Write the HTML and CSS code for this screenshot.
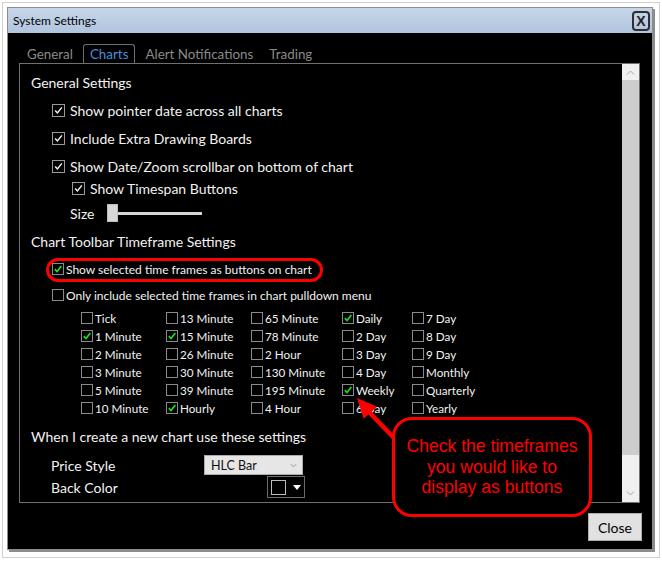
FILE: index.html
```html
<!DOCTYPE html>
<html lang="en">
<head>
  <meta charset="UTF-8" />
  <title>System Settings</title>
  <link rel="stylesheet" href="styles.css">
</head>
<body>

  <div class="frame">
    <div class="window">
      <div class="titlebar">
        <span class="titlebar__text">System Settings</span>
        <span class="titlebar__close">X</span>
      </div>

      <div class="window__body">
        <div class="tabs">
          <span class="tab">General</span>
          <span class="tab tab--active">Charts</span>
          <span class="tab">Alert Notifications</span>
          <span class="tab">Trading</span>
        </div>

        <div class="panel">
          <div class="panel__content">
            <div class="section-title">General Settings</div>
            <div class="row row--main"><span class="cb"><svg viewBox="0 0 13 13"><path d="M2.5 6.5 5.2 9.3 10.5 2.8"/></svg></span>Show pointer date across all charts</div>
            <div class="row row--main"><span class="cb"><svg viewBox="0 0 13 13"><path d="M2.5 6.5 5.2 9.3 10.5 2.8"/></svg></span>Include Extra Drawing Boards</div>
            <div class="row row--main"><span class="cb"><svg viewBox="0 0 13 13"><path d="M2.5 6.5 5.2 9.3 10.5 2.8"/></svg></span>Show Date/Zoom scrollbar on bottom of chart</div>
            <div class="row row--sub"><span class="cb"><svg viewBox="0 0 13 13"><path d="M2.5 6.5 5.2 9.3 10.5 2.8"/></svg></span>Show Timespan Buttons</div>
            <div class="row row--size">
              <span class="row__label">Size</span>
              <span class="slider"><span class="slider__thumb"></span><span class="slider__track"></span></span>
            </div>

            <div class="section-title section-title--tf">Chart Toolbar Timeframe Settings</div>
            <div class="row row--small row--hl"><span class="cb cb--sm cb--green"><svg viewBox="0 0 12 12"><path d="M2.2 6.2 4.8 9 10 2.5"/></svg></span>Show selected time frames as buttons on chart</div>
            <div class="row row--small row--only"><span class="cb cb--sm"></span>Only include selected time frames in chart pulldown menu</div>

            <div class="tf-grid">
              <span class="tf"><span class="cb cb--sm"></span>Tick</span>
              <span class="tf"><span class="cb cb--sm"></span>13 Minute</span>
              <span class="tf"><span class="cb cb--sm"></span>65 Minute</span>
              <span class="tf"><span class="cb cb--sm cb--green"><svg viewBox="0 0 12 12"><path d="M2.2 6.2 4.8 9 10 2.5"/></svg></span>Daily</span>
              <span class="tf"><span class="cb cb--sm"></span>7 Day</span>

              <span class="tf"><span class="cb cb--sm cb--green"><svg viewBox="0 0 12 12"><path d="M2.2 6.2 4.8 9 10 2.5"/></svg></span>1 Minute</span>
              <span class="tf"><span class="cb cb--sm cb--green"><svg viewBox="0 0 12 12"><path d="M2.2 6.2 4.8 9 10 2.5"/></svg></span>15 Minute</span>
              <span class="tf"><span class="cb cb--sm"></span>78 Minute</span>
              <span class="tf"><span class="cb cb--sm"></span>2 Day</span>
              <span class="tf"><span class="cb cb--sm"></span>8 Day</span>

              <span class="tf"><span class="cb cb--sm"></span>2 Minute</span>
              <span class="tf"><span class="cb cb--sm"></span>26 Minute</span>
              <span class="tf"><span class="cb cb--sm"></span>2 Hour</span>
              <span class="tf"><span class="cb cb--sm"></span>3 Day</span>
              <span class="tf"><span class="cb cb--sm"></span>9 Day</span>

              <span class="tf"><span class="cb cb--sm"></span>3 Minute</span>
              <span class="tf"><span class="cb cb--sm"></span>30 Minute</span>
              <span class="tf"><span class="cb cb--sm"></span>130 Minute</span>
              <span class="tf"><span class="cb cb--sm"></span>4 Day</span>
              <span class="tf"><span class="cb cb--sm"></span>Monthly</span>

              <span class="tf"><span class="cb cb--sm"></span>5 Minute</span>
              <span class="tf"><span class="cb cb--sm"></span>39 Minute</span>
              <span class="tf"><span class="cb cb--sm"></span>195 Minute</span>
              <span class="tf"><span class="cb cb--sm cb--green"><svg viewBox="0 0 12 12"><path d="M2.2 6.2 4.8 9 10 2.5"/></svg></span>Weekly</span>
              <span class="tf"><span class="cb cb--sm"></span>Quarterly</span>

              <span class="tf"><span class="cb cb--sm"></span>10 Minute</span>
              <span class="tf"><span class="cb cb--sm cb--green"><svg viewBox="0 0 12 12"><path d="M2.2 6.2 4.8 9 10 2.5"/></svg></span>Hourly</span>
              <span class="tf"><span class="cb cb--sm"></span>4 Hour</span>
              <span class="tf"><span class="cb cb--sm"></span>6 Day</span>
              <span class="tf"><span class="cb cb--sm"></span>Yearly</span>
            </div>

            <div class="section-title section-title--new">When I create a new chart use these settings</div>
            <div class="row row--field">
              <span class="field__label">Price Style</span>
              <span class="select">HLC Bar<svg class="select__arrow" viewBox="0 0 8 5"><path d="M1 1 4 4 7 1"/></svg></span>
            </div>
            <div class="row row--field row--color">
              <span class="field__label">Back Color</span>
              <span class="color-pick"><span class="color-pick__swatch"></span><span class="color-pick__arrow"></span></span>
            </div>
          </div>

          <div class="scroll">
            <div class="scroll__btn"><svg viewBox="0 0 9 5"><path d="M1 4.5 4.5 1 8 4.5"/></svg></div>
            <div class="scroll__thumb"></div>
            <div class="scroll__track"></div>
            <div class="scroll__btn"><svg viewBox="0 0 9 5"><path d="M1 0.5 4.5 4 8 0.5"/></svg></div>
          </div>
        </div>

        <div class="footer">
          <button class="btn">Close</button>
        </div>
      </div>
    </div>
  </div>

  <!-- annotations drawn over the dialog -->
  <div class="hl-ring"></div>
  <svg class="callout-arrow" viewBox="0 0 50 52">
    <line x1="45" y1="49" x2="19" y2="22"/>
    <polygon points="7,8 27,16.8 13.7,28.8"/>
  </svg>
  <div class="callout">Check the timeframes<br>you would like to<br>display as buttons</div>

</body>
</html>
```

FILE: styles.css
```css
/* ── base ── */
* { box-sizing: border-box; }
html, body { margin: 0; padding: 0; }
body {
  position: relative;
  width: 662px; height: 562px;
  overflow: hidden;
  background: #fff;
  font-family: Lato, "Noto Sans", sans-serif;
  color: #f2f2f2;
}

/* ── outer frame + window ── */
.frame {
  margin: 2px;
  width: 658px;
  height: 556px;
  border: 1px solid #d0d0d0;
  padding: 4px;
}
.window {
  width: 646px;
  height: 543px;
  border: 1px solid #8c8c8c;
  box-shadow: 2px 2px 0 #8c8c8c;
  display: flex;
  flex-direction: column;
}
.titlebar {
  height: 25px;
  display: flex;
  align-items: center;
  justify-content: space-between;
  padding: 0 2px 0 5px;
  background: linear-gradient(#c7d7ea, #b0c4de);
  color: #000;
  font-size: 12px;
}
.titlebar__close {
  width: 18px; height: 20px;
  border: 2px solid #2f2f2f;
  border-radius: 4px;
  display: flex; align-items: center; justify-content: center;
  font: bold 14px "Liberation Sans", sans-serif;
  color: #222;
}
.window__body {
  flex: 1;
  background: #000;
  display: flex;
  flex-direction: column;
}

/* ── tabs ── */
.tabs {
  height: 30px;
  display: flex;
  align-items: flex-end;
  padding-left: 13px;
}
.tab {
  height: 19px;
  line-height: 18px;
  padding: 0 5px;
  margin-right: 4px;
  border: 1px solid transparent;
  border-bottom: none;
  border-radius: 3px 3px 0 0;
  font-size: 13.4px;
  color: #8a8a8a;
}
.tab--active {
  padding: 0 6px;
  border-color: #6e6e6e;
  color: #4a8fd8;
}

/* ── panel ── */
.panel {
  margin-left: 11px;
  width: 621px;
  height: 440px;
  border: 1px solid #707070;
  display: flex;
}
.panel__content {
  flex: 1;
  padding-top: 5px;
}
.section-title {
  height: 27px;
  line-height: 28px;
  padding-left: 11px;
  font-size: 14px;
}
.section-title--tf { height: 24px; line-height: 24px; }
.section-title--new { height: 38px; line-height: 39px; }

.row {
  display: flex;
  align-items: center;
  font-size: 14px;
}
.row--main { height: 28px; padding-left: 32px; }
.row--sub { height: 16px; padding-left: 52px; }
.row--size { height: 34px; padding-left: 50px; }
.row__label { width: 37px; }
.row--small { font-size: 12px; padding-left: 32px; }
.row--hl { height: 30px; }
.row--only { height: 22px; }
.row--field { height: 20px; padding-left: 31px; }
.row--color { height: 24px; }

/* checkbox */
.cb {
  width: 13px; height: 13px;
  margin-right: 5px;
  border: 1px solid #9a9a9a;
  background: #000;
  flex: none;
  display: inline-flex;
}
.cb svg { width: 100%; height: 100%; fill: none; stroke: #f0f0f0; stroke-width: 1.8; }
.cb--sm { width: 12px; height: 12px; margin-right: 2px; border-color: #8a8a8a; }
.cb--green svg { stroke: #1ee21e; stroke-width: 2; }

/* size slider */
.slider { display: flex; align-items: center; }
.slider__thumb {
  width: 11px; height: 18px;
  background: #d9d9d9;
  border: 1px solid #bdbdbd;
}
.slider__track { width: 84px; height: 3px; background: #d6d6d6; }

/* timeframe grid */
.tf-grid {
  margin: 3px 0 0 61px;
  display: grid;
  grid-template-columns: 85px 85px 91px 70px 1fr;
  grid-auto-rows: 18px;
  font-size: 11.7px;
}
.tf { display: flex; align-items: center; }

/* fields */
.field__label { width: 153px; }
.select {
  width: 99px; height: 20px;
  display: flex; align-items: center; justify-content: space-between;
  padding: 0 5px 0 6px;
  background: #e6e6e6;
  border: 1px solid #acacac;
  color: #111;
  font-size: 12.5px;
}
.select__arrow { width: 7px; height: 5px; fill: none; stroke: #8f8f8f; stroke-width: 1; }
.color-pick {
  margin-left: 63px;
  width: 38px; height: 22px;
  border: 1px solid #6c6c6c;
  display: flex; align-items: center;
  padding-left: 3px;
}
.color-pick__swatch { width: 15px; height: 15px; border: 1px solid #bcbcbc; background: #000; }
.color-pick__arrow {
  margin-left: 7px;
  border-left: 4px solid transparent;
  border-right: 4px solid transparent;
  border-top: 5px solid #fff;
}

/* scrollbar */
.scroll {
  width: 17px;
  display: flex;
  flex-direction: column;
  background: #f0f0f0;
}
.scroll__btn { height: 16px; display: flex; align-items: center; justify-content: center; }
.scroll__btn:last-child { height: 17px; }
.scroll__btn svg { width: 9px; height: 5px; fill: none; stroke: #a3a3a3; stroke-width: 1; }
.scroll__thumb { height: 375px; background: #cdcdcd; }
.scroll__track { flex: 1; }

/* footer */
.footer {
  flex: 1;
  display: flex;
  justify-content: flex-end;
  align-items: flex-start;
  padding: 10px 10px 0 0;
}
.btn {
  width: 54px; height: 28px;
  background: #e1e1e1;
  border: 1px solid #adadad;
  font: 14px Lato, "Noto Sans", sans-serif;
  color: #000;
  padding: 0;
}

/* ── annotations ── */
.hl-ring {
  position: absolute;
  left: 46px; top: 258px;
  width: 277px; height: 24px;
  border: 3px solid #f00;
  border-radius: 12px;
}
.callout-arrow {
  position: absolute;
  left: 350px; top: 390px;
  width: 50px; height: 52px;
}
.callout-arrow line { stroke: #f00; stroke-width: 4.5; }
.callout-arrow polygon { fill: #f00; }
.callout {
  position: absolute;
  left: 392px; top: 417px;
  width: 200px; height: 100px;
  border: 3px solid #f00;
  border-radius: 20px;
  background: #000;
  color: #f00;
  font: 17.6px/20.5px "Liberation Sans", Arial, sans-serif;
  text-align: center;
  display: flex;
  align-items: center;
  justify-content: center;
}
```
